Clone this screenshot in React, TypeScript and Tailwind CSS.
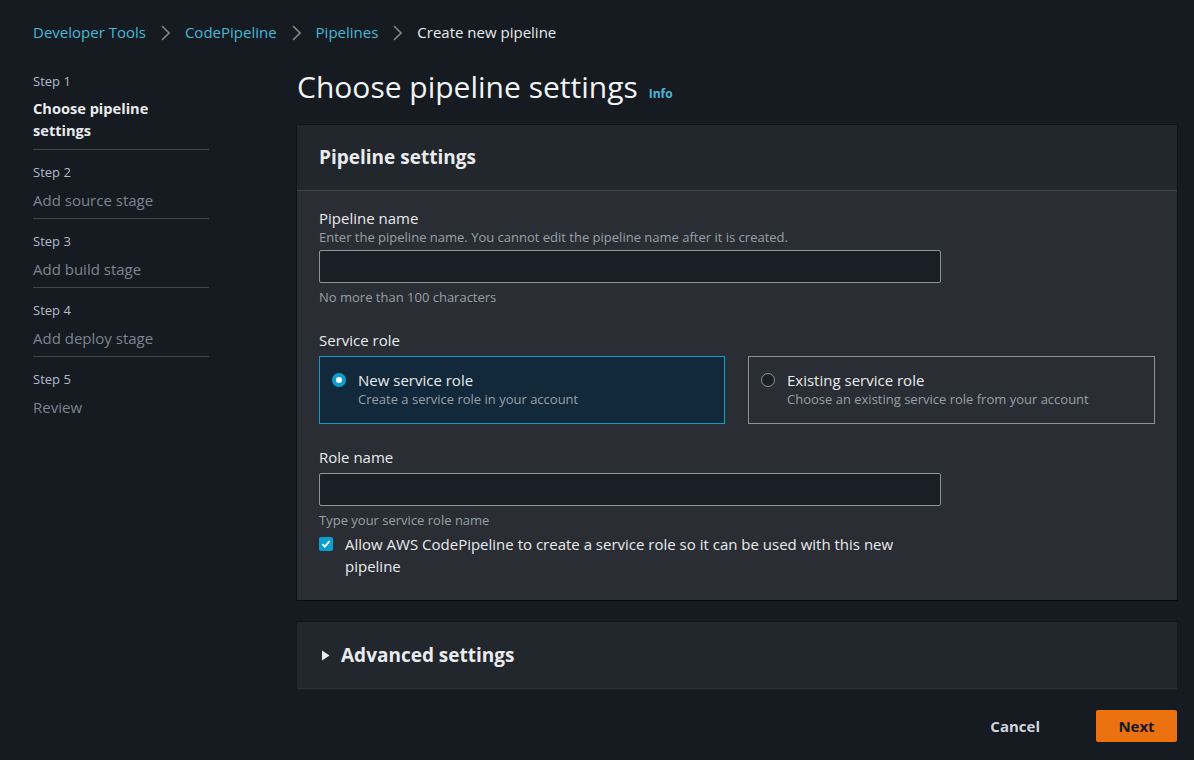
const font = { fontFamily: '"Open Sans", "Noto Sans", sans-serif' }

function Chevron() {
  return (
    <svg width="9" height="16" viewBox="0 0 9 16" className="mx-[15px] shrink-0">
      <path d="M1 1l7 7-7 7" fill="none" stroke="#7d8590" strokeWidth="1.6" />
    </svg>
  )
}

const steps = [
  { step: 'Step 1', name: 'Choose pipeline settings', active: true },
  { step: 'Step 2', name: 'Add source stage' },
  { step: 'Step 3', name: 'Add build stage' },
  { step: 'Step 4', name: 'Add deploy stage' },
  { step: 'Step 5', name: 'Review' },
]

export default function App() {
  return (
    <div className="min-h-[760px] w-[1194px] bg-[#161a21] text-[#d1d5db]" style={font}>
      <nav className="flex items-center h-[64px] pl-[33px] pt-[1px] text-[15px]">
        <span className="text-[#44b9d6]">Developer Tools</span>
        <Chevron />
        <span className="text-[#44b9d6]">CodePipeline</span>
        <Chevron />
        <span className="text-[#44b9d6]">Pipelines</span>
        <Chevron />
        <span className="text-[#e9ebed]">Create new pipeline</span>
      </nav>

      <div className="flex">
        <aside className="w-[176px] ml-[33px] shrink-0 pt-[7px]">
          {steps.map((s, i) => (
            <div
              key={s.step}
              className={
                s.active
                  ? 'border-b border-[#414750] pb-[8px] mb-[12px]'
                  : i < steps.length - 1
                    ? 'border-b border-[#414750] pb-[7px] mb-[12px]'
                    : 'pb-[8px]'
              }
            >
              <div className="text-[13px] leading-[20px] text-[#b4bbc3]">{s.step}</div>
              <div
                className={
                  s.active
                    ? 'text-[14.6px] leading-[22px] font-bold text-[#e9ebed] mt-[6px] w-[140px]'
                    : 'text-[15px] leading-[22px] text-[#7d8590] mt-[7px]'
                }
              >
                {s.name}
              </div>
            </div>
          ))}
        </aside>

        <main className="ml-[88px] w-[880px]">
          <div className="flex items-baseline h-[61px] pt-[3px]">
            <h1 className="text-[30px] leading-[40px] text-[#f2f3f3]">Choose pipeline settings</h1>
            <span className="ml-[11px] text-[12px] font-bold text-[#44b9d6]">Info</span>
          </div>

          <section className="bg-[#2a2d33] shadow-[0_1px_1px_rgba(0,0,0,0.4),0_0_0_1px_rgba(0,0,0,0.2)]">
            <div className="h-[66px] flex items-center px-[22px] bg-[#22262d] border-b border-[#414750]">
              <h2 className="text-[19px] font-bold text-[#e9ebed]">Pipeline settings</h2>
            </div>
            <div className="px-[22px] pt-[16px] pb-[23px]">
              <div className="text-[15px] leading-[22px] text-[#e9ebed]">Pipeline name</div>
              <div className="text-[13px] leading-[16px] text-[#98a0a8]">
                Enter the pipeline name. You cannot edit the pipeline name after it is created.
              </div>
              <div className="mt-[5px] w-[622px] h-[33px] bg-[#1a1f27] border border-[#8d9599] rounded-[2px]" />
              <div className="mt-[6px] text-[13px] leading-[16px] text-[#98a0a8]">No more than 100 characters</div>

              <div className="mt-[24px] text-[15px] leading-[22px] text-[#e9ebed]">Service role</div>
              <div className="mt-[5px] grid grid-cols-[406px_407px] gap-[23px]">
                <div className="h-[68px] border border-[#0a9fcf] bg-[#12293b] flex items-start pl-[12px] pt-[13px]">
                  <span className="mt-[3px] w-[14px] h-[14px] rounded-full bg-[#0a9fcf] flex items-center justify-center shrink-0">
                    <span className="w-[6px] h-[6px] rounded-full bg-white" />
                  </span>
                  <div className="ml-[12px]">
                    <div className="text-[15px] leading-[20px] text-[#e9ebed]">New service role</div>
                    <div className="text-[13px] leading-[18px] text-[#98a0a8]">Create a service role in your account</div>
                  </div>
                </div>
                <div className="h-[68px] border border-[#8d9599] flex items-start pl-[12px] pt-[13px]">
                  <span className="mt-[3px] w-[14px] h-[14px] rounded-full border border-[#8d9599] bg-[#1a1f27] shrink-0" />
                  <div className="ml-[12px]">
                    <div className="text-[15px] leading-[20px] text-[#e9ebed]">Existing service role</div>
                    <div className="text-[13px] leading-[18px] text-[#98a0a8]">Choose an existing service role from your account</div>
                  </div>
                </div>
              </div>

              <div className="mt-[22px] text-[15px] leading-[22px] text-[#e9ebed]">Role name</div>
              <div className="mt-[5px] w-[622px] h-[33px] bg-[#1a1f27] border border-[#8d9599] rounded-[2px]" />
              <div className="mt-[6px] text-[13px] leading-[16px] text-[#98a0a8]">Type your service role name</div>
              <div className="mt-[5px] flex items-start">
                <span className="mt-[4px] w-[14px] h-[14px] rounded-[2px] bg-[#0a9fcf] flex items-center justify-center shrink-0">
                  <svg width="10" height="10" viewBox="0 0 10 10">
                    <path d="M1.5 5.2l2.3 2.4 4.7-5.4" fill="none" stroke="white" strokeWidth="1.8" />
                  </svg>
                </span>
                <div className="ml-[12px] w-[570px] text-[15px] leading-[22px] text-[#e9ebed]">
                  Allow AWS CodePipeline to create a service role so it can be used with this new pipeline
                </div>
              </div>
            </div>
          </section>

          <section className="mt-[22px] h-[66px] bg-[#22262d] flex items-center px-[24px] shadow-[0_1px_1px_rgba(255,255,255,0.12),0_0_0_1px_rgba(0,0,0,0.2)]">
            <svg width="9" height="11" viewBox="0 0 9 11">
              <path d="M1 0.5l7.5 5-7.5 5z" fill="#e9ebed" />
            </svg>
            <h2 className="ml-[11px] text-[19px] font-bold text-[#e9ebed]">Advanced settings</h2>
          </section>

          <div className="mt-[22px] flex items-center justify-end">
            <button className="text-[15px] font-bold text-[#d1d5db] mr-[56px]">Cancel</button>
            <button className="w-[81px] h-[32px] rounded-[2px] bg-[#ec7211] text-[15px] font-bold text-[#16191f]">
              Next
            </button>
          </div>
        </main>
      </div>
    </div>
  )
}
